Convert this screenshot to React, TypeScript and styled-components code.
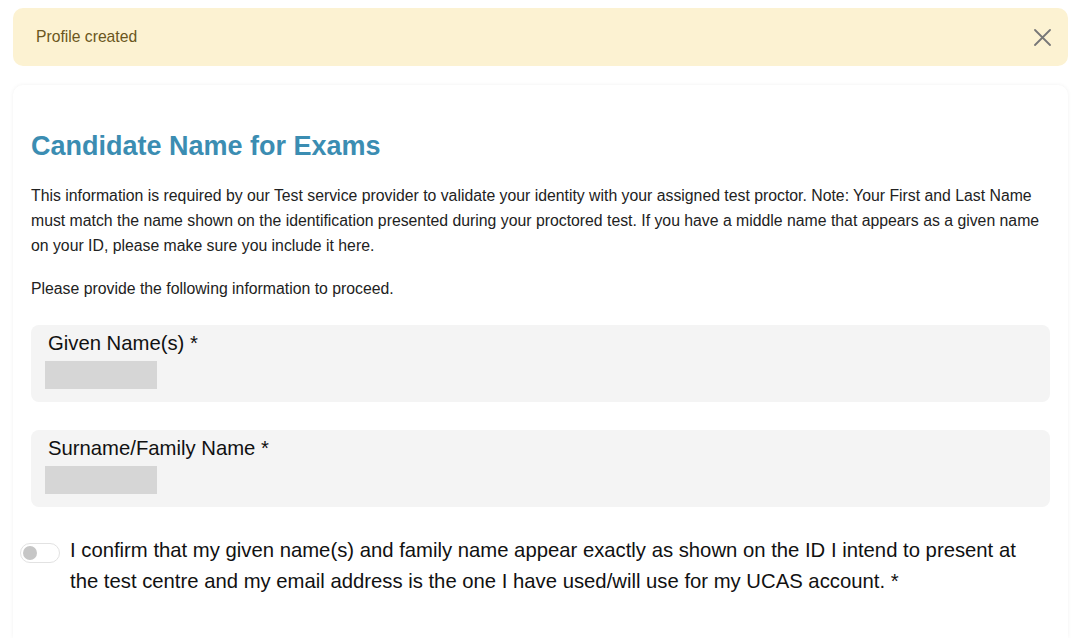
import React from 'react';
import styled, {createGlobalStyle} from 'styled-components';

const GlobalStyle = createGlobalStyle`
  body {
    margin: 0;
    background: #ffffff;
    font-family: "Liberation Sans", Arial, Helvetica, sans-serif;
    color: #222222;
  }
`;

const Page = styled.div`
  padding: 8px 12px 0 13px;
  display: flex;
  flex-direction: column;
  gap: 19px;
  height: 638px;
  box-sizing: border-box;
  overflow: hidden;
`;

const Alert = styled.div`
  display: flex;
  align-items: center;
  justify-content: space-between;
  height: 58px;
  padding: 0 17px 0 23px;
  background: #fcf2d2;
  border-radius: 10px;
  box-sizing: border-box;
`;

const AlertText = styled.span`
  font-size: 15.7px;
  color: #6a5620;
`;

const CloseButton = styled.button`
  border: 0;
  background: none;
  padding: 0;
  width: 18px;
  height: 18px;
  display: flex;
  align-items: center;
  justify-content: center;
  cursor: pointer;
`;

const Card = styled.section`
  flex: 1;
  background: #ffffff;
  border-radius: 10px 10px 0 0;
  box-shadow: 0 0 4px rgba(0, 0, 0, 0.06);
  padding: 45px 18px 0 18px;
`;

const Title = styled.h2`
  margin: 0 0 21px;
  font-size: 27px;
  font-weight: 700;
  color: #3b8db2;
  line-height: 32px;
`;

const Paragraph = styled.p<{$gap?: number}>`
  margin: 0 0 ${(p) => p.$gap ?? 0}px;
  font-size: 15.8px;
  line-height: 25px;
  color: #222222;
`;

const FieldBox = styled.div`
  background: #f4f4f4;
  border-radius: 8px;
  height: 77px;
  padding: 6px 14px 0 14px;
  box-sizing: border-box;
  margin-bottom: 28px;
`;

const FieldLabel = styled.label`
  display: block;
  font-size: 20.3px;
  line-height: 24px;
  color: #111111;
  padding-left: 3px;
`;

const Placeholder = styled.div`
  margin-top: 6px;
  width: 112px;
  height: 28px;
  background: #d6d6d6;
`;

const ConfirmRow = styled.div`
  display: flex;
  align-items: flex-start;
  gap: 10px;
  margin-left: -11px;
  margin-top: 6px;
  padding-right: 20px;
`;

const Toggle = styled.span`
  flex: none;
  width: 40px;
  height: 20px;
  margin-top: 8px;
  border: 1px solid #e2e2e2;
  border-radius: 10px;
  box-sizing: border-box;
  background: #ffffff;
  position: relative;

  &::after {
    content: '';
    position: absolute;
    left: 2px;
    top: 2px;
    width: 14px;
    height: 14px;
    border-radius: 50%;
    background: #c6c6c6;
  }
`;

const ConfirmText = styled.p`
  margin: 0;
  font-size: 20.3px;
  line-height: 31px;
  color: #111111;
`;

export default function App() {
  return (
    <>
      <GlobalStyle />
      <Page>
        <Alert>
          <AlertText>Profile created</AlertText>
          <CloseButton aria-label="Close">
            <svg width="17" height="17" viewBox="0 0 17 17">
              <path d="M1 1 L16 16 M16 1 L1 16" stroke="#777777" strokeWidth="1.8" strokeLinecap="round" />
            </svg>
          </CloseButton>
        </Alert>
        <Card>
          <Title>Candidate Name for Exams</Title>
          <Paragraph $gap={18}>
            This information is required by our Test service provider to validate your identity with your assigned test proctor. Note: Your First and Last Name must match the name shown on the identification presented during your proctored test. If you have a middle name that appears as a given name on your ID, please make sure you include it here.
          </Paragraph>
          <Paragraph $gap={24}>Please provide the following information to proceed.</Paragraph>
          <FieldBox>
            <FieldLabel>Given Name(s) *</FieldLabel>
            <Placeholder />
          </FieldBox>
          <FieldBox>
            <FieldLabel>Surname/Family Name *</FieldLabel>
            <Placeholder />
          </FieldBox>
          <ConfirmRow>
            <Toggle />
            <ConfirmText>
              I confirm that my given name(s) and family name appear exactly as shown on the ID I intend to present at the test centre and my email address is the one I have used/will use for my UCAS account. *
            </ConfirmText>
          </ConfirmRow>
        </Card>
      </Page>
    </>
  );
}
